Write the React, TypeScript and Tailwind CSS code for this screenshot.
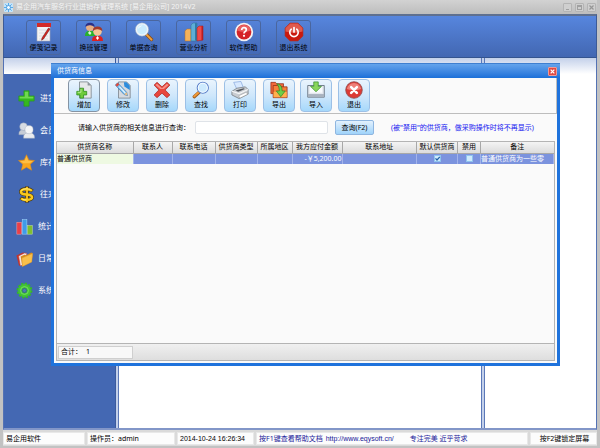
import React from 'react';

type IconProps = { className?: string };

const NoteIcon: React.FC<IconProps> = ({ className }) => (
  <svg className={className} viewBox="0 0 20 20">
    <rect x="3" y="2" width="13" height="17" fill="#f3f3f3" stroke="#a9a9b5" strokeWidth="0.6" />
    <rect x="3" y="1" width="14" height="4" fill="#d32a27" />
    <path d="M5 8h9M5 11h9M5 14h9M5 17h9" stroke="#cfd3dc" strokeWidth="0.6" />
    <path d="M14.5 6 16 7 9.5 17 7.6 18.2 8 16Z" fill="#d9221d" stroke="#5b1512" strokeWidth="0.5" />
  </svg>
);

const ShiftIcon: React.FC<IconProps> = ({ className }) => (
  <svg className={className} viewBox="0 0 20 20">
    <path d="M1 14q0-5 4-5h3q3 0 3 5Z" fill="#27b22b" />
    <path d="m5.500 9-1.500 2 2 2 1.500-2Z" fill="#dff5df" />
    <circle cx="6" cy="5" r="4" fill="#e9b083" />
    <path d="M1.500 5Q1 1 6 .8q5 .2 4.500 4.200Q8 3 6 3.200 3 3 1.500 5Z" fill="#2b2f86" />
    <path d="M8 19q0-5 3.500-5h3.500q4 0 4 5Z" fill="#dc2020" />
    <circle cx="13.500" cy="9.500" r="4.300" fill="#f3c493" />
    <path d="M9 9Q8.500 4.500 13.500 4.500T18.300 9Q15.500 7 13.500 7.200 10.500 7 9 9Z" fill="#a3392b" />
    <path d="m13.500 14-1.500 2 1.500 2 1.500-2Z" fill="#fff" />
  </svg>
);

const SearchIcon: React.FC<IconProps> = ({ className }) => (
  <svg className={className} viewBox="0 0 20 20">
    <path d="m12 12 5.500 5.500" stroke="#8b4e16" strokeWidth="3.400" strokeLinecap="round" />
    <path d="m12.500 12.600 5 5" stroke="#f1a03b" strokeWidth="2" strokeLinecap="round" />
    <circle cx="8" cy="7.500" r="5.800" fill="#c9ebfd" stroke="#eef4fa" strokeWidth="1.800" />
    <circle cx="8" cy="7.500" r="6.700" fill="none" stroke="#7e97b5" strokeWidth="0.5" />
    <path d="M4 7q.5-3.500 4.500-3.500-3 1-4.500 3.500Z" fill="#fff" />
  </svg>
);

// same glass, handle to the lower left
const FindIcon: React.FC<IconProps> = ({ className }) => (
  <svg className={className} viewBox="0 0 20 20">
    <path d="m8 12.500-5.500 5" stroke="#9b5a1c" strokeWidth="3.600" strokeLinecap="round" />
    <path d="m7.500 12.500-5 4.600" stroke="#f39a35" strokeWidth="2.200" strokeLinecap="round" />
    <circle cx="12" cy="7.500" r="6.200" fill="#cdeafe" stroke="#5b7fc9" strokeWidth="1.200" />
    <circle cx="12" cy="7.500" r="5" fill="none" stroke="#f4faff" strokeWidth="1.200" />
  </svg>
);

const BarsIcon: React.FC<IconProps> = ({ className }) => (
  <svg className={className} viewBox="0 0 20 20">
    <path d="M1 9 3 7h4v12H1Z" fill="#f4b25a" stroke="#b46e24" strokeWidth="0.5" />
    <path d="M7 3 9 1h4v18H7Z" fill="#5eaed6" stroke="#2c6d96" strokeWidth="0.5" />
    <path d="m11 1 2 .2V19l-2-.5Z" fill="#2f7ba8" />
    <path d="m13 6 2-2h4v14l-6 1Z" fill="#ee4a4a" stroke="#a31a1a" strokeWidth="0.5" />
    <path d="m17.500 4 1.500.2V18l-1.500.4Z" fill="#b81c20" />
  </svg>
);

const HelpIcon: React.FC<IconProps> = ({ className }) => (
  <svg className={className} viewBox="0 0 20 20">
    <circle cx="10" cy="10" r="9.200" fill="#f5f2f2" />
    <circle cx="10" cy="10" r="7.400" fill="#d42327" />
    <path d="M3 8.500a7.200 7.200 0 0 1 14 0Q10 11 3 8.500Z" fill="#ea6161" />
    <path d="M7.700 8q0-2.300 2.300-2.300T12.300 7.700q0 1.300-1.300 2-1 .6-1 1.700" fill="none" stroke="#fff" strokeWidth="1.700" />
    <circle cx="10" cy="13.800" r="1.100" fill="#fff" />
  </svg>
);

const PowerIcon: React.FC<IconProps> = ({ className }) => (
  <svg className={className} viewBox="0 0 20 20">
    <path d="M6 1h8l5 5v8l-5 5H6l-5-5V6Z" fill="#c9190f" stroke="#9d3a34" strokeWidth="0.6" />
    <path d="M6.200 1.500h7.600L18.500 6v3.500Q10 12 1.500 9.500V6Z" fill="#df5a4d" />
    <path d="M7.300 7.200a4.200 4.200 0 1 0 5.400 0" fill="none" stroke="#fff" strokeWidth="1.600" strokeLinecap="round" />
    <path d="M10 5.500v4.500" stroke="#fff" strokeWidth="1.700" strokeLinecap="round" />
  </svg>
);

const PlusIcon: React.FC<IconProps> = ({ className }) => (
  <svg className={className} viewBox="0 0 20 20">
    <path d="M7 1h6v6h6v6h-6v6H7v-6H1V7h6Z" fill="#35b81e" stroke="#2a9a1e" strokeWidth="0.8" strokeLinejoin="round" />
    <path d="M8 2h4v6h6v2H2V8h6Z" fill="#6fd850" />
  </svg>
);

const MembersIcon: React.FC<IconProps> = ({ className }) => (
  <svg className={className} viewBox="0 0 20 20">
    <path d="M1 15q-.5-6 5-6t5 6Z" fill="#c6ccd6" stroke="#8e9ab3" strokeWidth="0.5" />
    <circle cx="6.500" cy="5.500" r="4.500" fill="#d8dce3" stroke="#8e9ab3" strokeWidth="0.5" />
    <path d="M6.500 19q-.5-6.500 6.500-6.500t6.500 6.500Z" fill="#e9ebef" stroke="#a3abba" strokeWidth="0.5" />
    <circle cx="13" cy="9" r="4.800" fill="#f5f5f6" stroke="#a3abba" strokeWidth="0.5" />
  </svg>
);

const StarIcon: React.FC<IconProps> = ({ className }) => (
  <svg className={className} viewBox="0 0 20 20">
    <path d="m10 .8 2.800 6.200 6.700.7-5 4.400L16 19.200l-6-3.500-6 3.500 1.500-7.100-5-4.400L7.200 7Z" fill="#f9a51d" stroke="#e08a14" strokeWidth="0.6" />
    <path d="m10 2.600 2.100 5.200 5.400.6-4 2.600H6.500l-4-2.600 5.400-.6Z" fill="#ffbf45" />
  </svg>
);

const MoneyIcon: React.FC<IconProps> = ({ className }) => (
  <svg className={className} viewBox="0 0 20 20">
    <path d="M17 6Q14.500 3.800 9.500 3.800 3.500 3.800 3.500 6.800t6.500 3.200q6.500.3 6.500 3.300t-6.500 3Q5.500 16.300 3 14" fill="none" stroke="#4a3608" strokeWidth="4.400" />
    <path d="M10.500.5v19" stroke="#4a3608" strokeWidth="4.400" />
    <path d="M10.500 1v18" stroke="#f0b818" strokeWidth="2.600" />
    <path d="M16.500 5.700Q14.500 3.800 9.500 3.800 3.500 3.800 3.500 6.800t6.500 3.200q6.500.3 6.500 3.300t-6.500 3Q5.500 16.300 3.500 14.500" fill="none" stroke="#f8c81c" strokeWidth="3" />
    <path d="M14.500 4Q12 3.300 9.500 3.300q-4.500 0-5.500 2.200M5 15.600q2 .8 5 .8" fill="none" stroke="#ffee8a" strokeWidth="1" />
  </svg>
);

const StatsIcon: React.FC<IconProps> = ({ className }) => (
  <svg className={className} viewBox="0 0 20 20">
    <rect x="1" y="5" width="5.500" height="14" fill="#e8404a" stroke="#f6a5a5" strokeWidth="0.6" />
    <rect x="7.300" y="2" width="5.500" height="17" fill="#3f9be8" stroke="#a5d8fb" strokeWidth="0.6" />
    <rect x="13.600" y="9" width="5.500" height="10" fill="#7fbf2f" stroke="#cdeb95" strokeWidth="0.6" />
  </svg>
);

const FoldersIcon: React.FC<IconProps> = ({ className }) => (
  <svg className={className} viewBox="0 0 20 20">
    <path d="M.5 6.500 8 3l4 1-6 14-2.500.5Z" fill="#c3352c" />
    <path d="m3 7 7-3.500 3 .5-5 14-3 .5Z" fill="#f4e4e0" stroke="#b33" strokeWidth="0.6" />
    <path d="m5.500 7.500 4.500-2 2 .6 6-3.100 1.500.800L18.500 14 7.500 19.500Z" fill="#d88a1c" />
    <path d="m7 9.500 12.500-5.300L18.500 14 7.500 19.500Z" fill="#f9c04b" stroke="#e0a030" strokeWidth="0.500" />
  </svg>
);

const GearIcon: React.FC<IconProps> = ({ className }) => (
  <svg className={className} viewBox="0 0 20 20">
    <circle cx="10" cy="10" r="8" fill="none" stroke="#35b528" strokeWidth="2.600" strokeDasharray="2.600 1.589" />
    <circle cx="10" cy="10" r="5.300" fill="none" stroke="#42c433" strokeWidth="4.600" />
    <circle cx="10" cy="10" r="4.600" fill="none" stroke="#7ce068" strokeWidth="1" />
    <circle cx="10" cy="10" r="2.400" fill="#4c78b8" stroke="#1f8d1a" strokeWidth="0.5" />
  </svg>
);

const AddIcon: React.FC<IconProps> = ({ className }) => (
  <svg className={className} viewBox="0 0 20 20">
    <path d="M5 1h9l4 4v14H5Z" fill="#e6e8ea" stroke="#7c848c" strokeWidth="0.9" />
    <path d="M14 1v4h4Z" fill="#8b949c" />
    <path d="M5.500 8h4v3.500H13v4H9.500V19h-4v-3.500H2v-4h3.500Z" fill="#6fcb3b" stroke="#2f8f22" strokeWidth="0.9" />
    <path d="M6.600 9v3.500H3" fill="none" stroke="#c3f0a0" strokeWidth="1" />
  </svg>
);

const EditIcon: React.FC<IconProps> = ({ className }) => (
  <svg className={className} viewBox="0 0 20 20">
    <path d="M5 1h9l4 4v14H5Z" fill="#d5dae0" stroke="#7c848c" strokeWidth="0.9" />
    <path d="M11 1.500h3l3.500 3.500v5l-6-4Z" fill="#2d8cdc" />
    <path d="m1.500 4.500 2.500-2.500 10 10.500 1 3.700-3.800-1.200Z" fill="#7cc2f2" stroke="#2f6fae" strokeWidth="0.7" />
    <path d="m6 6.300 6.500 7" stroke="#e6f5ff" strokeWidth="1.400" />
    <path d="M1.500 4.500 4 2l1.900 2-2.500 2.500Z" fill="#dc4a3c" />
    <path d="m11.300 14.800 2.700-2.300 1 3.700Z" fill="#f0bb7c" />
  </svg>
);

const DeleteIcon: React.FC<IconProps> = ({ className }) => (
  <svg className={className} viewBox="0 0 20 20">
    <path d="m4.500 1.500 5.500 5 5.500-5 3.300 3-5.300 5.500 5.300 5.500-3.300 3-5.500-5-5.500 5-3.300-3L6.500 10 1.200 4.500Z" fill="#e8463d" stroke="#a82a25" strokeWidth="0.8" strokeLinejoin="round" />
    <path d="m4.500 3 5.500 5 5.500-5 1.700 1.500L12 9H8L2.800 4.500Z" fill="#f79088" />
  </svg>
);

const PrintIcon: React.FC<IconProps> = ({ className }) => (
  <svg className={className} viewBox="0 0 20 20">
    <path d="m3 1.500 8-1 3 7.500-7 2Z" fill="#d8e9ff" stroke="#7b9ed8" strokeWidth="0.7" />
    <path d="m1 11.500 5.500-3.500L16 6.500l3 3v5L9 19.500l-8-4Z" fill="#c9cdd2" stroke="#6e7378" strokeWidth="0.8" />
    <path d="m1 11.500 8 2.500 10-4.500" fill="none" stroke="#f6f6f6" strokeWidth="1.200" />
    <path d="m5 10.500 9-2.500 1.500 1L8 12Z" fill="#54595f" />
    <path d="m8.500 16.500 8-3.800 2.500 1.800-9 4.500Z" fill="#fff" stroke="#888" strokeWidth="0.5" />
  </svg>
);

const ExportIcon: React.FC<IconProps> = ({ className }) => (
  <svg className={className} viewBox="0 0 20 20">
    <path d="M1 14V1.500h5L7.500 3H15v4H5v7Z" fill="#f16a3c" stroke="#8f2a14" strokeWidth="0.8" />
    <path d="M3.500 18.500V5h5L10 6.500h9v12H3.500Z" fill="#f7813a" stroke="#8f2a14" strokeWidth="0.8" />
    <path d="M4 12h14.600v6.100H4Z" fill="#ffb04e" />
    <path d="M7.500 3q6 .5 6 8H17l-5 6.500L7 11h3.500q0-5-3-8Z" fill="#6fce48" stroke="#2b7f22" strokeWidth="0.7" />
  </svg>
);

const ImportIcon: React.FC<IconProps> = ({ className }) => (
  <svg className={className} viewBox="0 0 20 20">
    <path d="M.800 5h18.400v13H.8Z" fill="#e3e8ee" stroke="#5b6876" strokeWidth="0.900" />
    <path d="M1 14.500h18V18H1Z" fill="#a9b3bf" />
    <path d="M3 7h14v6H3Z" fill="#f9fbfd" />
    <path d="M7.500 1h5v5H16l-6 6-6-6h3.500Z" fill="#8ad65c" stroke="#37902b" strokeWidth="0.8" />
  </svg>
);

const ExitIcon: React.FC<IconProps> = ({ className }) => (
  <svg className={className} viewBox="0 0 20 20">
    <circle cx="10" cy="10" r="9.200" fill="#dc3a35" stroke="#8e4a4a" strokeWidth="0.9" />
    <path d="M2 9a8.100 8.100 0 0 1 16 0q-8 3-16 0Z" fill="#ee8078" />
    <path d="m6.800 6.800 6.400 6.400m0-6.400-6.400 6.400" stroke="#fff" strokeWidth="2.800" strokeLinecap="round" />
  </svg>
);

const LogoIcon: React.FC<IconProps> = ({ className }) => (
  <svg className={className} viewBox="0 0 10 10">
    <rect width="10" height="10" rx="1" fill="#c5e4fa" />
    <path d="M5 0v10M0 5h10M1.500 1.500l7 7m0-7-7 7" stroke="#4aa3e6" strokeWidth="1" />
    <circle cx="5" cy="5" r="2.200" fill="#f4fbff" stroke="#3b93dc" strokeWidth="0.9" />
  </svg>
);

const mainTools = [
  { label: '便笺记录', Icon: NoteIcon },
  { label: '换班管理', Icon: ShiftIcon },
  { label: '单据查询', Icon: SearchIcon },
  { label: '营业分析', Icon: BarsIcon },
  { label: '软件帮助', Icon: HelpIcon },
  { label: '退出系统', Icon: PowerIcon },
];

const sideMenu = [
  { label: '进货', Icon: PlusIcon },
  { label: '会员', Icon: MembersIcon },
  { label: '库存', Icon: StarIcon },
  { label: '往来', Icon: MoneyIcon },
];

const sideMenuMore = [
  { label: '统计', Icon: StatsIcon },
  { label: '日常', Icon: FoldersIcon },
  { label: '系统', Icon: GearIcon },
];

const editTools = [
  { label: '增加', Icon: AddIcon, active: true },
  { label: '修改', Icon: EditIcon },
  { label: '删除', Icon: DeleteIcon },
  { label: '查找', Icon: FindIcon },
  { label: '打印', Icon: PrintIcon },
  { label: '导出', Icon: ExportIcon },
];

const fileTools = [
  { label: '导入', Icon: ImportIcon },
  { label: '退出', Icon: ExitIcon },
];

const columns = [
  { title: '供货商名称', width: 'w-[76px]' },
  { title: '联系人', width: 'w-[39px]' },
  { title: '联系电话', width: 'w-[43px]' },
  { title: '供货商类型', width: 'w-[42px]' },
  { title: '所属地区', width: 'w-[35px]' },
  { title: '我方应付金额', width: 'w-[50px]' },
  { title: '联系地址', width: '' },
  { title: '默认供货商', width: 'w-[41px]' },
  { title: '禁用', width: 'w-[23px]' },
  { title: '备注', width: 'w-[73px]' },
];

type Tool = { label: string; Icon: React.FC<IconProps>; active?: boolean };

const DialogButton: React.FC<Tool> = ({ label, Icon, active }) => (
  <button
    type="button"
    className={`flex h-[33px] w-8 flex-col items-center rounded-sm border bg-gradient-to-b from-[#eaf4fd] via-[#cfe7fb] to-[#a5d8fb] pt-px ${active ? 'border-[#8493a3]' : 'border-[#9cc0e6]'}`}
  >
    <Icon className="h-[19px] w-5" />
    <span className="leading-[12px]">{label}</span>
  </button>
);

const SideItem: React.FC<Tool> = ({ label, Icon }) => (
  <button type="button" className="flex h-8 items-center gap-[5px] text-[8px] text-white">
    <Icon className="h-[17px] w-[17px] shrink-0" />
    <span className="whitespace-nowrap">{label}</span>
  </button>
);

const GridCheck: React.FC<{ label: string; checked: boolean }> = ({ label, checked }) => (
  <label className="mx-auto grid h-[7px] w-[7px]">
    <input
      type="checkbox"
      aria-label={label}
      defaultChecked={checked}
      className="peer col-start-1 row-start-1 h-[7px] w-[7px] appearance-none border border-[#8fc4ee] bg-[#cfeafc]"
    />
    <svg className="invisible col-start-1 row-start-1 h-[7px] w-[7px] peer-checked:visible" viewBox="0 0 7 7">
      <path d="M1.500 3.300 3 5l2.800-3.200" fill="none" stroke="#1f5fa8" strokeWidth="1.200" />
    </svg>
  </label>
);

const SupplierDialog: React.FC = () => (
  <section
    role="dialog"
    aria-labelledby="dialog-title"
    className="absolute top-[63px] right-[40px] bottom-[82px] left-[51px] flex flex-col border-x-[3px] border-b-[3px] border-[#1f73dc] bg-[#fafafa]"
  >
    <header className="-mx-[3px] flex h-[15px] shrink-0 items-center justify-between border-t border-[#3f7fd0] bg-gradient-to-b from-[#63a3ec] to-[#1b70d8] pr-[3px] pl-[6px] text-white">
      <h2 id="dialog-title">供货商信息</h2>
      <button type="button" aria-label="关闭" className="flex h-[9px] w-[9px] items-center justify-center rounded-[1px] border border-[#f09a94] bg-[#e04a44]">
        <svg className="h-[5px] w-[5px]" viewBox="0 0 6 6">
          <path d="m.8.8 4.400 4.400m0-4.400L.8 5.200" stroke="#fff" strokeWidth="1.500" />
        </svg>
      </button>
    </header>

    <div className="flex h-9 shrink-0 items-start gap-[5px] border-r border-b border-[#bdbdbd] pt-px pl-[14px]">
      <div className="flex gap-[7px]">
        {editTools.map((tool) => (
          <DialogButton key={tool.label} {...tool} />
        ))}
      </div>
      <div className="flex gap-[6px]">
        {fileTools.map((tool) => (
          <DialogButton key={tool.label} {...tool} />
        ))}
      </div>
    </div>

    <form className="flex h-[27px] shrink-0 items-center pl-6" onSubmit={(e) => e.preventDefault()}>
      <label htmlFor="keyword" className="w-[117px] whitespace-nowrap">
        请输入供货商的相关信息进行查询：
      </label>
      <input id="keyword" type="text" className="h-[13px] w-[133px] rounded-xs border border-[#dfe3e8] bg-white px-1 outline-none" />
      <button type="submit" className="ml-[7px] h-[15px] w-[39px] rounded-xs border border-[#8fb6e0] bg-gradient-to-b from-[#e3f1fd] to-[#9fd3fa] leading-[12px]">
        查询(F2)
      </button>
      <p className="ml-[17px] whitespace-nowrap text-[#1414f0]">(被"禁用"的供货商，做采购操作时将不再显示)</p>
    </form>

    <div className="mx-[2px] mb-[2px] flex flex-1 flex-col border border-[#b4b4b4]">
      <table className="w-full table-fixed border-collapse">
        <thead>
          <tr className="h-[11px] bg-gradient-to-b from-[#f4f4f4] to-[#dcdcdc]">
            {columns.map((col) => (
              <th key={col.title} className={`${col.width} overflow-hidden border-r border-b border-[#a8a8a8] p-0 leading-[10px] font-normal whitespace-nowrap last:border-r-0`}>
                {col.title}
              </th>
            ))}
          </tr>
        </thead>
        <tbody>
          <tr className="h-[11px] bg-[#7b93de] leading-[10px] whitespace-nowrap text-white [&>td]:border-r [&>td]:border-[#a3b4ea] [&>td]:p-0">
            <td className="bg-[#eef9e2] text-black">普通供货商</td>
            <td />
            <td />
            <td />
            <td />
            <td className="text-right">-￥5,200.00</td>
            <td />
            <td>
              <GridCheck label="默认供货商" checked />
            </td>
            <td>
              <GridCheck label="禁用" checked={false} />
            </td>
            <td className="overflow-hidden">普通供货商为一些零</td>
          </tr>
        </tbody>
      </table>
      <footer className="mt-auto flex h-[17px] items-center border-t border-[#b4b4b4] bg-gradient-to-b from-[#f0f0f0] to-[#dedede] pl-px">
        <div className="flex h-[13px] w-[75px] items-center gap-1 border border-[#cfcfcf] bg-[#f8f8f8] pl-[2px]">
          <span>合计：</span>
          <span>1</span>
        </div>
      </footer>
    </div>
  </section>
);

const App: React.FC = () => (
  <div className="relative flex min-h-screen flex-col overflow-hidden bg-[#c2c2c2] px-[3px] pb-[2px] font-['Noto_Sans','Noto_Sans_CJK_SC',sans-serif] text-[7px] leading-[10px] text-black">
    <header className="flex h-[14px] shrink-0 items-center bg-gradient-to-b from-[#d2d2d2] to-[#bdbdbd] pr-px pl-px">
      <LogoIcon className="h-[9px] w-[9px]" />
      <h1 className="ml-[3px] text-[#f4f4f4]">易企用汽车服务行业进销存管理系统 [易企用公司] 2014V2</h1>
      <div className="ml-auto flex gap-[3px]">
        <button type="button" aria-label="最小化" className="flex h-[9px] w-[9px] items-end justify-center rounded-[1px] border border-[#b4b4b4] bg-[#cfcfcf] pb-px">
          <span className="h-px w-[3px] bg-[#a0a0a0]" />
        </button>
        <button type="button" aria-label="最大化" className="flex h-[9px] w-[9px] items-center justify-center rounded-[1px] border border-[#b4b4b4] bg-[#cfcfcf]">
          <span className="h-[5px] w-[5px] border border-t-2 border-[#a0a0a0]" />
        </button>
        <button type="button" aria-label="关闭窗口" className="flex h-[9px] w-[9px] items-center justify-center rounded-[1px] border border-[#b4b4b4] bg-[#cfcfcf]">
          <svg className="h-[5px] w-[5px]" viewBox="0 0 5 5">
            <path d="m.5.5 4 4m0-4-4 4" stroke="#969696" strokeWidth="1.200" />
          </svg>
        </button>
      </div>
    </header>

    <nav className="flex h-11 shrink-0 items-end gap-[15px] border-t-2 border-b border-x border-t-[#5f708f] border-b-[#34548f] border-x-[#3c5a96] bg-gradient-to-b from-[#5786de] to-[#4267b2] pb-[2px] pl-[22px]">
      {mainTools.map(({ label, Icon }) => (
        <button key={label} type="button" className="flex h-[35px] w-[35px] flex-col items-center rounded-[3px] border border-[#4a669e] pt-px">
          <Icon className="h-5 w-5" />
          <span className="leading-[12px] whitespace-nowrap">{label}</span>
        </button>
      ))}
    </nav>

    <main className="grid flex-1 grid-cols-[112px_1fr_112px] gap-[2px] border-x border-b-2 border-[#5472b4] border-b-[#8296c8] bg-[#c3d0ea]">
      <aside className="flex flex-col border-r border-[#3c5a9c] bg-[#4468b3]">
        <div className="h-4 bg-gradient-to-b from-[#c4d1ea] to-white" />
        <div className="mt-2 flex flex-col pl-[14px]">
          {sideMenu.map((item) => (
            <SideItem key={item.label} {...item} />
          ))}
        </div>
        <div className="flex flex-col pl-3">
          {sideMenuMore.map((item) => (
            <SideItem key={item.label} {...item} />
          ))}
        </div>
      </aside>
      <div className="border-x border-[#5b78b8] bg-white">
        <div className="h-4 bg-gradient-to-b from-[#c4d1ea] to-white" />
      </div>
      <div className="border-l border-[#5b78b8] bg-white">
        <div className="h-4 bg-gradient-to-b from-[#c4d1ea] to-white" />
      </div>
    </main>

    <footer className="flex h-4 shrink-0 gap-[2px] bg-[#dadada] pt-[2px] pb-px [&>div]:flex [&>div]:items-center [&>div]:border [&>div]:border-[#e8e8e8] [&>div]:bg-[#fcfcfc] [&>div]:pl-[2px] [&>div]:whitespace-nowrap">
      <div className="w-[82px]">易企用软件</div>
      <div className="w-[88px]">操作员：admin</div>
      <div className="w-[77px] font-['Liberation_Sans',sans-serif]">2014-10-24 16:26:34</div>
      <div className="flex-1 text-[#20209a]">
        <span>按F1键查看帮助文档</span>
        <a href="http://www.eqysoft.cn/" className="ml-[3px] font-['Liberation_Sans',sans-serif]">
          http://www.eqysoft.cn/
        </a>
        <span className="ml-4">专注完美 近乎苛求</span>
      </div>
      <div className="w-[67px] justify-center">按F2键锁定屏幕</div>
    </footer>

    <SupplierDialog />
  </div>
);

export default App;
